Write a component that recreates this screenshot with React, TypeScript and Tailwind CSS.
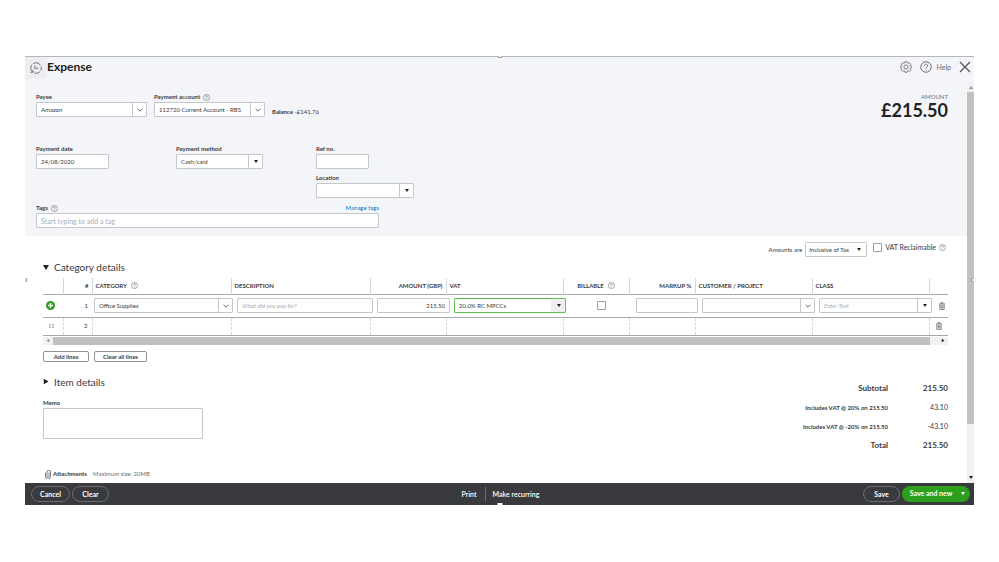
import type { ReactNode } from "react";

const field =
  "h-[15px] min-w-0 rounded-[1px] border border-[#c4c8ce] bg-white px-1 leading-[13px] text-[#393a3d] outline-none placeholder:text-[#a9adb5]";
const label = "flex h-2 items-center gap-[3px] text-[6px] font-bold leading-[8px] text-[#393a3d]";
const box = "size-[9px] appearance-none rounded-[1px] border border-[#9a9da3] bg-white";

function HelpIcon({ className = "size-[7px]" }: { className?: string }) {
  return (
    <svg viewBox="0 0 24 24" className={`${className} shrink-0`} fill="none" stroke="#6b6c72" strokeWidth="2">
      <circle cx="12" cy="12" r="10.5" />
      <path d="M8.8 9.5a3.2 3.2 0 1 1 4.800 2.800c-1 .6-1.600 1.100-1.600 2.200M12 16.600v2" />
    </svg>
  );
}

function HistoryIcon() {
  return (
    <svg viewBox="0 0 24 24" className="size-3" fill="none" stroke="#55565b" strokeWidth="1.6">
      <path d="M5 20A10.500 10.500 0 0 1 4 5.500M6.500 3.200A10.500 10.500 0 0 1 21 6.500M22.300 9.500A10.500 10.500 0 0 1 21.500 17M19.500 19.600A10.500 10.500 0 0 1 9 22.200" />
      <path d="M1 20.500h5v-5M9.500 7v5.500h7" />
    </svg>
  );
}

function GearIcon() {
  return (
    <svg viewBox="0 0 24 24" className="size-3" fill="none" stroke="#6b6c72" strokeWidth="1.7">
      <path d="M9.800 1.500h4.400l.7 2.600 1.300.6 2.400-1.400 3.100 3.100-1.400 2.400.6 1.300 2.600.7v2.400l-2.600.7-.6 1.300 1.400 2.400-3.100 3.100-2.400-1.400-1.300.6-.7 2.600H9.800l-.7-2.600-1.300-.6-2.400 1.400-3.100-3.100 1.400-2.400-.6-1.300-2.600-.7v-2.400l2.600-.7.6-1.300-1.400-2.400 3.100-3.100 2.400 1.400 1.300-.6z" />
      <circle cx="12" cy="12" r="4.2" />
    </svg>
  );
}

function TrashIcon() {
  return (
    <svg viewBox="0 0 12 16" className="h-2 w-[6px]" fill="#d9dadd" stroke="#77787d" strokeWidth="1.5">
      <path d="M.5 3.500h11M4 3V1h4v2M1.500 3.500v11.500h9V3.500M4.500 6v6.500M7.500 6v6.500" />
    </svg>
  );
}

function Chevron() {
  return (
    <svg viewBox="0 0 10 6" className="h-1 w-[6px]" fill="none" stroke="#55565b" strokeWidth="1.5">
      <path d="M1 1l4 4 4-4" />
    </svg>
  );
}

function Caret({ className = "h-[3px] w-1 text-[#222]" }: { className?: string }) {
  return (
    <svg viewBox="0 0 8 5" preserveAspectRatio="none" className={className} fill="currentColor">
      <path d="M0 0h8L4 5z" />
    </svg>
  );
}

type ComboProps = {
  id?: string;
  name?: string;
  value?: string;
  placeholder?: string;
  caret?: boolean;
  active?: boolean;
  className?: string;
};

function Combo({ id, name, value = "", placeholder, caret, active, className = "" }: ComboProps) {
  return (
    <div
      className={`flex h-[15px] min-w-0 rounded-[1px] border bg-white ${active ? "border-[#5fc24f]" : "border-[#c4c8ce]"} ${className}`}
    >
      <input
        id={id}
        aria-label={name}
        defaultValue={value}
        placeholder={placeholder}
        className="min-w-0 flex-1 bg-transparent px-1 text-[6px] leading-[13px] text-[#393a3d] outline-none placeholder:italic placeholder:text-[#a9adb5]"
      />
      <button
        type="button"
        aria-label="Show options"
        className={`flex w-[14px] shrink-0 items-center justify-center border-l ${active ? "border-[#eceef1] bg-[#eceef1]" : "border-[#c4c8ce]"}`}
      >
        {caret ? <Caret /> : <Chevron />}
      </button>
    </div>
  );
}

function Th({ children, right, center }: { children?: ReactNode; right?: boolean; center?: boolean }) {
  return (
    <th className="border-r border-[#d4d7dc] px-[3px] align-middle font-bold last:border-r-0">
      <span className={`flex items-center gap-1 whitespace-nowrap ${right ? "justify-end" : ""} ${center ? "justify-center" : ""}`}>
        {children}
      </span>
    </th>
  );
}

const columns = [
  "w-[20px]",
  "w-[29px]",
  "w-[139px]",
  "w-[139px]",
  "w-[76px]",
  "w-[117px]",
  "w-[66px]",
  "w-[66px]",
  "w-[117px]",
  "w-[117px]",
  "w-[19px]",
];

const totals = [
  { name: "Subtotal", amount: "215.50", strong: true },
  { name: "Includes VAT @ 20% on 215.50", amount: "43.10", strong: false },
  { name: "Includes VAT @ -20% on 215.50", amount: "-43.10", strong: false },
  { name: "Total", amount: "215.50", strong: true },
];

function Header() {
  return (
    <header className="flex h-[27px] items-start justify-between border-t border-[#b4b8b4] bg-[#f4f5f9]">
      <div className="flex items-start">
        <div className="flex h-[22px] w-[22px] items-center justify-center bg-[#eceef1]">
          <HistoryIcon />
        </div>
        <h1 className="text-[12px] font-bold leading-[20px] text-[#222]">Expense</h1>
      </div>
      <div className="flex h-[20px] items-center gap-2 pr-[3px]">
        <button type="button" aria-label="Settings">
          <GearIcon />
        </button>
        <button type="button" className="flex items-center gap-1 text-[7px] leading-[10px] text-[#6b6c72]">
          <HelpIcon className="size-3" />
          Help
        </button>
        <button type="button" aria-label="Close">
          <svg viewBox="0 0 12 12" className="size-3" stroke="#55565b" strokeWidth="1.3">
            <path d="M1 1l10 10M11 1L1 11" />
          </svg>
        </button>
      </div>
    </header>
  );
}

function Details() {
  return (
    <section className="flex h-[153px] items-start justify-between bg-[#f4f5f9] pl-[11px] pr-[19px] pt-[10px]">
      <div>
        <div className="flex items-end gap-[7px]">
          <div className="flex w-[111px] flex-col gap-[1px]">
            <label htmlFor="payee" className={label}>Payee</label>
            <Combo id="payee" value="Amazon" />
          </div>
          <div className="flex w-[111px] flex-col gap-[1px]">
            <label htmlFor="account" className={label}>
              Payment account <HelpIcon />
            </label>
            <Combo id="account" value="112720 Current Account - RBS" />
          </div>
          <p className="text-[6px] leading-[11px] text-[#393a3d]"><b>Balance</b> -£141.76</p>
        </div>

        <div className="mt-7 flex">
          <div className="flex w-[140px] flex-col gap-[1px]">
            <label htmlFor="date" className={label}>Payment date</label>
            <input id="date" defaultValue="24/08/2020" className={`${field} w-[73px] text-[6px]`} />
          </div>
          <div className="flex w-[140px] flex-col gap-[1px]">
            <label htmlFor="method" className={label}>Payment method</label>
            <Combo id="method" value="Cash/card" caret className="w-[87px]" />
          </div>
          <div className="flex flex-col gap-[1px]">
            <label htmlFor="ref" className={label}>Ref no.</label>
            <input id="ref" className={`${field} w-[53px] text-[6px]`} />
            <label htmlFor="location" className={`${label} mt-1`}>Location</label>
            <Combo id="location" caret className="w-[98px]" />
          </div>
        </div>

        <div className="mt-[6px] flex w-[343px] flex-col gap-[1px]">
          <div className="flex items-center justify-between">
            <label htmlFor="tags" className={label}>
              Tags <HelpIcon />
            </label>
            <a href="#tags" className="text-[6px] leading-[8px] text-[#0077c5]">Manage tags</a>
          </div>
          <input id="tags" placeholder="Start typing to add a tag" className={`${field} text-[7px]`} />
        </div>
      </div>
      <div className="text-right text-[#222]">
        <p className="text-[6px] leading-[8px] text-[#6b6c72]">AMOUNT</p>
        <p className="text-[18px] font-bold leading-[18px]">£215.50</p>
      </div>
    </section>
  );
}

function TaxOptions() {
  return (
    <div className="flex items-start justify-end pr-[2px] text-[6px] leading-[10px] text-[#393a3d]">
      <label htmlFor="amounts" className="pr-[3px] pt-[3px]">Amounts are</label>
      <div className="relative flex items-center">
        <select
          id="amounts"
          className="h-[15px] w-[62px] appearance-none rounded-[1px] border border-[#c4c8ce] bg-white pl-[3px] text-[6px]"
        >
          <option>Inclusive of Tax</option>
        </select>
        <span className="pointer-events-none absolute right-[6px]">
          <Caret />
        </span>
      </div>
      <label className="ml-[6px] flex items-center gap-[3px] text-[7px]">
        <input type="checkbox" className={box} />
        VAT Reclaimable
        <HelpIcon />
      </label>
    </div>
  );
}

function Lines() {
  return (
    <div className="mt-1">
      <table className="w-full table-fixed border-collapse text-[6px] leading-[8px] text-[#393a3d]">
        <colgroup>
          {columns.map((width, i) => (
            <col key={i} className={width} />
          ))}
        </colgroup>
        <thead>
          <tr className="h-4 border-b border-[#a5a7ab] text-left">
            <Th />
            <Th right>#</Th>
            <Th>CATEGORY <HelpIcon /></Th>
            <Th>DESCRIPTION</Th>
            <Th right>AMOUNT (GBP)</Th>
            <Th>VAT</Th>
            <Th center>BILLABLE <HelpIcon /></Th>
            <Th right>MARKUP %</Th>
            <Th>CUSTOMER / PROJECT</Th>
            <Th>CLASS</Th>
            <Th />
          </tr>
        </thead>
        <tbody>
          <tr className="h-[23px] border-b border-[#a5a7ab]">
            <td>
              <button type="button" aria-label="Add line" className="ml-[3px] flex">
                <svg viewBox="0 0 16 16" className="size-[9px]">
                  <circle cx="8" cy="8" r="8" fill="#2ca01c" />
                  <path d="M8 3.500v9M3.500 8h9" stroke="#fff" strokeWidth="2.5" />
                </svg>
              </button>
            </td>
            <td className="pr-1 text-right">1</td>
            <td colSpan={9}>
              <div className="grid grid-cols-[139fr_136fr_73fr_112fr_62fr_62fr_113fr_113fr_12px] items-center gap-1 pl-[2px]">
                <Combo name="Category" value="Office Supplies" />
                <input
                  aria-label="Description"
                  placeholder="What did you pay for?"
                  className={`${field} text-[6px] placeholder:italic`}
                />
                <input aria-label="Amount (GBP)" defaultValue="215.50" className={`${field} text-right text-[6px]`} />
                <Combo name="VAT" value="20.0% RC MPCCs" caret active />
                <input type="checkbox" aria-label="Billable" className={`${box} justify-self-center`} />
                <input aria-label="Markup %" className={`${field} text-[6px]`} />
                <Combo name="Customer / project" />
                <Combo name="Class" placeholder="Enter Text" caret />
                <button type="button" aria-label="Delete line 1" className="flex justify-center">
                  <TrashIcon />
                </button>
              </div>
            </td>
          </tr>
          <tr className="h-[18px] border-b border-[#a5a7ab]">
            <td className="border-r border-dashed border-r-[#d4d7dc]">
              <svg viewBox="0 0 10 8" className="ml-[6px] h-1 w-[5px]" fill="#b5b7bb">
                <path d="M0 0h4v2H0zM6 0h4v2H6zM0 3h4v2H0zM6 3h4v2H6zM0 6h4v2H0zM6 6h4v2H6z" />
              </svg>
            </td>
            <td className="border-r border-dashed border-r-[#d4d7dc] pr-1 text-right">2</td>
            {columns.slice(2, 10).map((_, i) => (
              <td key={i} className="border-r border-dashed border-r-[#d4d7dc]" />
            ))}
            <td>
              <button type="button" aria-label="Delete line 2" className="ml-[6px] flex">
                <TrashIcon />
              </button>
            </td>
          </tr>
        </tbody>
      </table>
      <div className="mt-[1px] flex h-2 items-center bg-[#f1f1f1]">
        <span className="flex w-[10px] justify-center">
          <Caret className="h-[3px] w-1 rotate-90 text-[#8d9096]" />
        </span>
        <span className="h-full flex-1 bg-[#c1c1c1]" />
        <span className="flex w-[18px] justify-center pl-2">
          <Caret className="h-[3px] w-1 -rotate-90 text-[#222]" />
        </span>
      </div>
      <div className="mt-[6px] flex gap-[5px] text-[#393a3d]">
        <button type="button" className="h-[11px] w-[46px] rounded-[2px] border border-[#8d9096] text-[6px] font-bold leading-[9px]">
          Add lines
        </button>
        <button type="button" className="h-[11px] w-[53px] rounded-[2px] border border-[#8d9096] text-[6px] font-bold leading-[9px]">
          Clear all lines
        </button>
      </div>
    </div>
  );
}

function Totals() {
  return (
    <dl className="flex flex-col pt-1 text-[#393a3d]">
      {totals.map((row) => (
        <div key={row.name} className="flex h-[19px] items-center">
          <dt className={row.strong ? "flex-1 text-right text-[8px] font-bold" : "flex-1 text-right text-[6px] font-bold"}>
            {row.name}
          </dt>
          <dd className={row.strong ? "w-[60px] text-right text-[8px] font-bold" : "w-[60px] text-right text-[7px]"}>
            {row.amount}
          </dd>
        </div>
      ))}
    </dl>
  );
}

function Footer() {
  const pill = "h-4 rounded-full border border-[#6b6c72] text-[7px] font-bold leading-[14px]";
  return (
    <footer className="grid h-[22px] grid-cols-3 items-center bg-[#393a3d] pl-[6px] pr-1 text-white">
      <div className="flex gap-[2px]">
        <button type="button" className={`${pill} w-[39px]`}>Cancel</button>
        <button type="button" className={`${pill} w-[37px]`}>Clear</button>
      </div>
      <div className="flex items-center justify-center text-[7px] font-semibold leading-[14px]">
        <button type="button" className="border-r border-[#6b6c72] pr-2">Print</button>
        <button type="button" className="pl-[7px]">Make recurring</button>
      </div>
      <div className="flex justify-end gap-[2px]">
        <button type="button" className={`${pill} w-[37px]`}>Save</button>
        <div className="flex h-4 w-[68px] items-center rounded-full bg-[#2ca01c] text-[7px] font-bold">
          <button type="button" className="flex-1 pl-1">Save and new</button>
          <button type="button" aria-label="More save options" className="flex w-[14px] justify-center">
            <Caret className="h-[3px] w-1 text-white" />
          </button>
        </div>
      </div>
    </footer>
  );
}

export default function App() {
  return (
    <main className="bg-white px-[25px] py-14 font-['Lato',sans-serif]">
      <div className="relative">
        <Header />
        <div className="flex">
          <div className="min-w-0 flex-1">
            <Details />
            <section className="pb-1 pl-[18px] pr-[19px] pt-[6px]">
              <TaxOptions />
              <h2 className="mt-[3px] flex items-center gap-[5px] text-[10px] leading-[14px] text-[#393a3d]">
                <Caret className="h-[5px] w-[6px] text-[#222]" />
                Category details
              </h2>
              <Lines />
              <div className="mt-[13px] flex justify-between">
                <div>
                  <h2 className="flex items-center gap-[5px] text-[10px] leading-[14px] text-[#393a3d]">
                    <Caret className="h-[5px] w-[6px] -rotate-90 text-[#222]" />
                    Item details
                  </h2>
                  <label htmlFor="memo" className={`${label} mt-[10px]`}>Memo</label>
                  <textarea
                    id="memo"
                    className="mt-[1px] block h-[31px] w-[160px] resize-none rounded-[1px] border border-[#c4c8ce] bg-white text-[6px]"
                  />
                  <div className="mt-[31px] flex items-center gap-[2px] pl-[2px] text-[6px] leading-[8px] text-[#6b6c72]">
                    <svg viewBox="0 0 12 18" className="h-[9px] w-[6px]" fill="none" stroke="#55565b" strokeWidth="1.5">
                      <path d="M8 5v8a2 2 0 0 1-4 0V4a3.200 3.200 0 0 1 7 0v9.500a5 5 0 0 1-10 0V5" />
                    </svg>
                    <b className="text-[#393a3d]">Attachments</b>
                    <span className="pl-1">Maximum size: 20MB</span>
                  </div>
                </div>
                <Totals />
              </div>
            </section>
          </div>
          <div className="flex w-[7px] flex-col items-center bg-[#f1f1f1]">
            <Caret className="my-[3px] h-[3px] w-1 rotate-180 text-[#8d9096]" />
            <span className="w-full flex-[335] bg-[#c1c1c1]" />
            <span className="flex-[48]" />
            <Caret className="my-1 h-[3px] w-1 text-[#222]" />
          </div>
        </div>
        <Footer />
        <span className="absolute -bottom-[1px] left-1/2 h-[3px] w-[5px] -translate-x-1/2 bg-white" />
        <span className="absolute left-1/2 top-0 h-[2px] w-[5px] -translate-x-1/2 rounded-b-sm border border-t-0 border-[#8d9096] bg-white" />
        <span className="absolute left-0 top-1/2 h-[5px] w-[2px] -translate-y-1/2 rounded-r-sm border border-l-0 border-[#8d9096]" />
        <span className="absolute right-0 top-1/2 h-[5px] w-[3px] -translate-y-1/2 rounded-l-sm border border-r-0 border-[#8d9096] bg-white" />
      </div>
    </main>
  );
}
